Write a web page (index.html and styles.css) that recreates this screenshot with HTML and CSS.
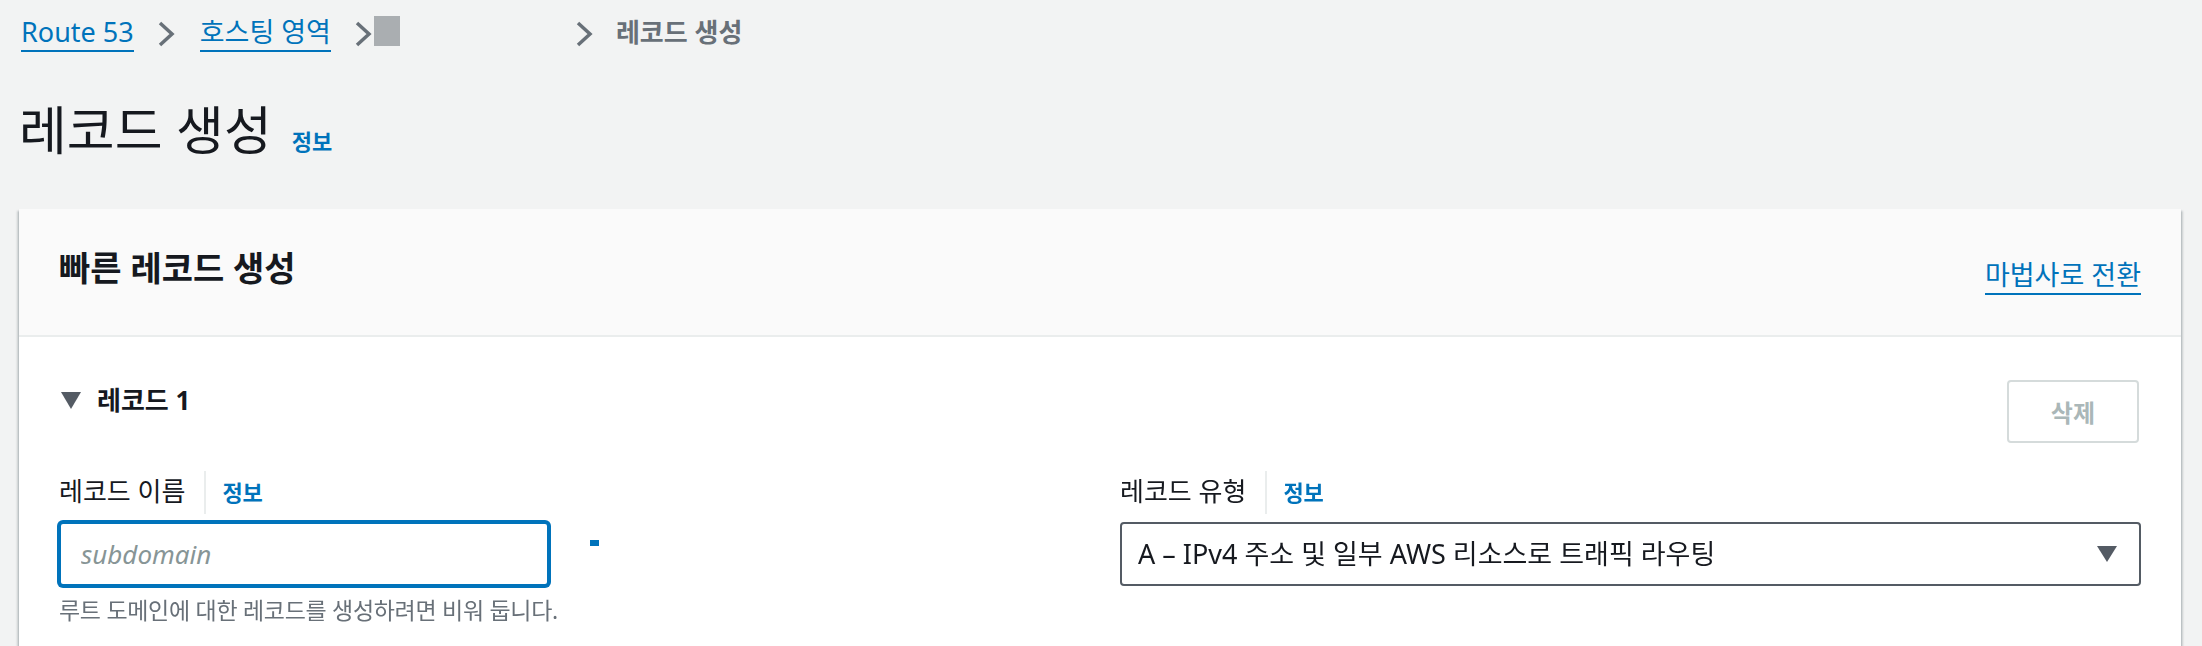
FILE: index.html
```html
<!DOCTYPE html>
<html lang="ko">
<head>
    <meta charset="UTF-8">
    <meta name="viewport" content="width=device-width, initial-scale=1.0">
    <title>레코드 생성 | Route 53</title>
    <link rel="stylesheet" href="styles.css">
</head>
<body>
    <div class="page">
        <nav class="breadcrumbs">
            <a class="crumb-link" href="#">Route 53</a>
            <svg class="crumb-sep" viewBox="0 0 18 28"><polyline points="3,3 15,14 3,25"/></svg>
            <a class="crumb-link" href="#">호스팅 영역</a>
            <svg class="crumb-sep" viewBox="0 0 18 28"><polyline points="3,3 15,14 3,25"/></svg>
            <span class="crumb-hidden"><span class="redacted"></span></span>
            <svg class="crumb-sep" viewBox="0 0 18 28"><polyline points="3,3 15,14 3,25"/></svg>
            <span class="crumb-current">레코드 생성</span>
        </nav>

        <div class="page-header">
            <h1>레코드 생성</h1>
            <a class="info-link title-info" href="#">정보</a>
        </div>

        <div class="panel">
            <div class="panel-header">
                <h2>빠른 레코드 생성</h2>
                <a class="header-link" href="#">마법사로 전환</a>
            </div>

            <div class="panel-body">
                <div class="record-head">
                    <div class="record-title">
                        <svg class="expand-icon" viewBox="0 0 20 17"><polygon points="0,0 20,0 10,17"/></svg>
                        <span>레코드 1</span>
                    </div>
                    <button class="btn-remove" disabled>삭제</button>
                </div>

                <div class="record-fields">
                    <div class="field">
                        <div class="field-label">
                            <span>레코드 이름</span>
                            <a class="info-link field-info" href="#">정보</a>
                        </div>
                        <div class="name-row">
                            <input class="text-input" type="text" placeholder="subdomain" autofocus>
                            <span class="domain-suffix"></span>
                        </div>
                        <div class="hint">루트 도메인에 대한 레코드를 생성하려면 비워 둡니다.</div>
                    </div>

                    <div class="field">
                        <div class="field-label">
                            <span>레코드 유형</span>
                            <a class="info-link field-info" href="#">정보</a>
                        </div>
                        <div class="select-box">
                            <span>A – IPv4 주소 및 일부 AWS 리소스로 트래픽 라우팅</span>
                            <svg class="select-arrow" viewBox="0 0 20 16"><polygon points="0,0 20,0 10,16"/></svg>
                        </div>
                    </div>
                </div>
            </div>
        </div>
    </div>
</body>
</html>
```

FILE: styles.css
```css
body {
    margin: 0;
    background-color: #f2f3f3;
    font-family: "Noto Sans", "Noto Sans CJK KR", sans-serif;
    color: #16191f;
}
.page {
    padding: 0 21px 0 19px;
}

/* breadcrumbs */
.breadcrumbs {
    display: flex;
    align-items: baseline;
    height: 40px;
    padding-top: 11px;
    font-size: 27px;
}
.crumb-link {
    color: #0073bb;
    text-decoration: none;
    border-bottom: 2px solid #0073bb;
    margin-left: 2px;
}
.crumb-sep {
    align-self: center;
    width: 18px;
    height: 28px;
    margin: 6px 23px 0;
    fill: none;
    stroke: #687078;
    stroke-width: 3.5;
}
.crumb-hidden {
    align-self: center;
    width: 178px;
    margin-left: -21px;
    display: flex;
}
.redacted {
    width: 26px;
    height: 30px;
    background-color: #aaaeb1;
}
.crumb-current {
    font-size: 26px;
    font-weight: 700;
    color: #687078;
}

/* page title */
.page-header {
    display: flex;
    align-items: baseline;
    margin-top: 47px;
}
.page-header h1 {
    margin: 0;
    font-size: 52px;
    font-weight: 400;
    line-height: 64px;
}
.info-link {
    color: #0073bb;
    font-weight: 700;
    text-decoration: none;
}
.title-info {
    font-size: 22px;
    margin-left: 20px;
}

/* panel */
.panel {
    margin-top: 47px;
    background-color: #fff;
    box-shadow: 0 2px 2px rgba(0, 28, 36, 0.3), 2px 2px 2px rgba(0, 28, 36, 0.15), -2px 2px 2px rgba(0, 28, 36, 0.15);
}
.panel-header {
    display: flex;
    justify-content: space-between;
    align-items: flex-end;
    padding: 37px 40px 44px;
    background-color: #fafafa;
    border-bottom: 2px solid #eaeded;
}
.panel-header h2 {
    margin: 0;
    font-size: 34px;
    font-weight: 700;
    line-height: 45px;
}
.header-link {
    font-size: 27px;
    color: #0073bb;
    text-decoration: none;
    border-bottom: 2px solid #0073bb;
    margin-bottom: -4px;
}
.panel-body {
    padding: 43px 40px 80px;
}

/* record */
.record-head {
    display: flex;
    justify-content: space-between;
    align-items: flex-start;
}
.record-title {
    display: flex;
    align-items: center;
    font-size: 26px;
    font-weight: 700;
    line-height: 40px;
    padding-left: 2px;
}
.expand-icon {
    width: 20px;
    height: 17px;
    margin-right: 16px;
    fill: #545b64;
}
.btn-remove {
    height: 63px;
    padding: 0 42px;
    font-family: inherit;
    font-size: 24px;
    font-weight: 700;
    color: #aab7b8;
    background-color: #fff;
    border: 2px solid #d5dbdb;
    border-radius: 4px;
    margin-right: 2px;
}
.record-fields {
    display: grid;
    grid-template-columns: 1fr 1fr;
    column-gap: 40px;
    margin-top: 27px;
}
.field-label {
    display: flex;
    align-items: baseline;
    font-size: 26px;
    line-height: 43px;
}
.field-info {
    font-size: 22px;
    line-height: 43px;
    border-left: 2px solid #eaeded;
    margin-left: 19px;
    padding-left: 16px;
}
.name-row {
    display: flex;
    align-items: flex-start;
    margin-top: 8px;
}
.text-input {
    box-sizing: border-box;
    width: 490px;
    height: 64px;
    padding: 0 20px;
    font-family: inherit;
    font-size: 26px;
    color: #16191f;
    caret-color: #16191f;
    border: 2px solid #0073bb;
    border-radius: 4px;
    box-shadow: 0 0 0 2px #0073bb;
    outline: none;
}
.text-input::placeholder {
    color: #879596;
    font-style: italic;
}
.domain-suffix {
    width: 9px;
    height: 6px;
    margin: 18px 0 0 41px;
    background-color: #0073bb;
}
.hint {
    margin-top: 8px;
    font-size: 23px;
    line-height: 32px;
    letter-spacing: -0.3px;
    color: #687078;
}
.select-box {
    box-sizing: border-box;
    display: flex;
    justify-content: space-between;
    align-items: center;
    height: 64px;
    margin-top: 8px;
    padding: 0 22px 0 16px;
    font-size: 27px;
    line-height: 36px;
    border: 2px solid #545b64;
    border-radius: 4px;
}
.select-arrow {
    width: 20px;
    height: 16px;
    fill: #545b64;
}
```
